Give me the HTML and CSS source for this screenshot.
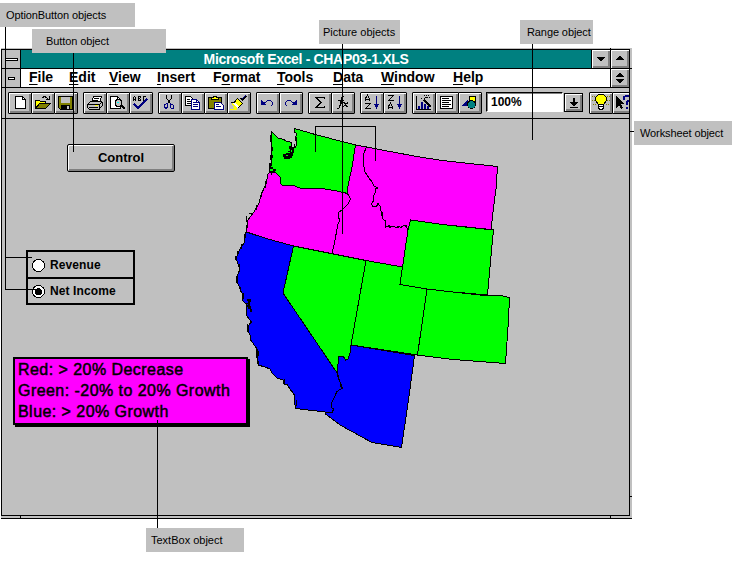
FILE: index.html
```
<!DOCTYPE html>
<html lang="en">
<head>
<meta charset="utf-8">
<title>Microsoft Excel - CHAP03-1.XLS</title>
<link rel="stylesheet" href="styles.css">
</head>
<body>
<main class="window">
  <header class="titlebar">
    <div class="sysbox"><i class="dash"></i></div>
    <h1><span>Microsoft Excel - CHAP03-1.XLS</span></h1>
    <div class="winbtn"><svg width="18" height="18"><path d="M5 7h8v1h-1v1h-1v1h-1v1H8v-1H7V9H6V8H5z"/></svg></div>
    <div class="winbtn"><svg width="18" height="18"><path d="M5 10h8V9h-1V8h-1V7h-1V6H8v1H7v1H6v1H5z"/></svg></div>
  </header>
  <nav class="menubar">
    <div class="sysbox"><i class="dash small"></i></div>
    <ul class="menus">
      <li class="w40"><u>F</u>ile</li><li class="w40"><u>E</u>dit</li><li class="w48"><u>V</u>iew</li><li class="w56"><u>I</u>nsert</li><li class="w64">F<u>o</u>rmat</li><li class="w56"><u>T</u>ools</li><li class="w48"><u>D</u>ata</li><li class="w72"><u>W</u>indow</li><li><u>H</u>elp</li>
    </ul>
    <div class="winbtn"><svg width="18" height="18"><path d="M5 8h8V7h-1V6h-1V5h-1V4H8v1H7v1H6v1H5zM5 10h8v1h-1v1h-1v1h-1v1H8v-1H7v-1H6v-1H5z"/></svg></div>
  </nav>
  <div class="toolbar">
    <div class="group">
      <button><svg viewBox="0 0 24 22"><path class="w k" d="M7.500 4.500H14.500L17.500 7.500V16.500H7.500Z"/><path class="k" d="M14.500 4.500V7.500H17.500"/></svg></button>
      <button><svg viewBox="0 0 24 22"><path class="y k" d="M4.500 16.500V8.500H8.500L9.500 9.500H14.500V11.500"/><path class="ol k" d="M4.500 16.500L8.500 11.500H19.500L14.500 16.500Z"/><path class="k" d="M11.500 5.500L13.500 4.500L15.500 5.500L17.500 7.500M18.500 4V7.500H15"/></svg></button>
      <button><svg viewBox="0 0 24 22"><path class="ol k" d="M4.500 4.500H18.500V17.500H6.500L4.500 15.500Z"/><path fill="#c0c0c0" d="M7 5h9v6H7z"/><path d="M7 13h9v4H7z"/><path fill="#c0c0c0" d="M13 14h2v3h-2z"/></svg></button>
    </div>
    <div class="group">
      <button><svg viewBox="0 0 24 22"><path class="w k" d="M8.500 10.500L10.500 4.500H18.500L16.500 10.500"/><path class="k" d="M11 6.500H16M10 8.500H15"/><path class="g k" d="M4.500 12.500L7.500 9.500H18.500L19.500 10.500V13.500L16.500 16.500V17.500H6.500L4.500 15.500Z"/><path class="k" d="M4 12.500H16.500L19 10M16.500 13V17M6 15.500H15"/><path fill="#ff0" d="M12 13h3v1h-3z"/></svg></button>
      <button><svg viewBox="0 0 24 22"><path class="w k" d="M4.500 4.500H11.500L14.500 7.500V16.500H4.500Z"/><path class="k" d="M11.500 4.500V7.500H14.500"/><circle class="lens" cx="12.500" cy="11" r="3.500"/><path d="M15 13L19 17" stroke="#000" stroke-width="2"/><path d="M11 10h2v1h-2z" fill="#0ff"/></svg></button>
      <button><svg viewBox="0 0 24 22"><path class="k" d="M4.500 9V6L5.500 4.500L6.500 6V9M4 7.500H7M9.500 8.500V4.500H11L11.500 5.500L10.500 6.500L11.500 7.500L11 8.500H9M16.500 5L15.500 4.500L14.500 5V8L15.500 8.500L16.500 8"/><path stroke="#000080" stroke-width="2" fill="none" d="M5 12L9 16L18 7"/></svg></button>
    </div>
    <div class="group">
      <button><svg viewBox="0 0 24 22"><path class="k" d="M8.500 3V6L12.500 12M13.500 3V6L9.500 12"/><path class="n" d="M9.500 11.500L6.500 12.500V15.500L8.500 16.500L9.500 14.500ZM12.500 11.500L15.500 13.500V16.500H13.500L12.500 15.500Z"/></svg></button>
      <button><svg viewBox="0 0 24 22"><path class="w k" d="M4.500 4.500H9.500L11.500 6.500V13.500H4.500Z"/><path class="k" d="M6 7.500H9M6 9.500H10M6 11.500H10"/><path class="w n" d="M10.500 7.500H15.500L18.500 10.500V17.500H10.500Z"/><path class="n" d="M12 10.500H15M12 12.500H17M12 14.500H17M15.500 8V10.500H18"/></svg></button>
      <button><svg viewBox="0 0 24 22"><path class="ol k" d="M4.500 5.500H17.500V16.500H4.500Z"/><path class="y k" d="M7.500 7.500V5.500H9.500V4.500H12.500V5.500H14.500V7.500Z"/><path class="w n" d="M10.500 10.500H16.500L19.500 13.500V17.500H10.500Z"/><path class="n" d="M12 12.500H15M12 14.500H17"/></svg></button>
      <button><svg viewBox="0 0 24 22"><path class="y" d="M10 7L15 12L9 17L4 16L7 15L4 12Z"/><path fill="#fff" d="M7 10L12 15L10 16L5 11Z"/><path class="k" d="M4 10.500H7L10.500 6.500L15.500 11.500L11 16"/><path d="M12 6L16 10L17 7L20 4L18 3L15 6Z"/><path class="n" d="M14.500 7.500L18.500 3.500"/><path stroke="#ff0" d="M3 17.500H10"/></svg></button>
    </div>
    <div class="group">
      <button><svg viewBox="0 0 24 22"><path fill="#000080" d="M5 8L11 13H5Z"/><path class="n" d="M8 11.500L11.500 8.500H14.500L16.500 10.500V12.500L15.500 14"/></svg></button>
      <button><svg viewBox="0 0 24 22"><path fill="#000080" d="M18 8L12 13H18Z"/><path class="n" d="M15 11.500L11.500 8.500H8.500L6.500 10.500V12.500L7.500 14"/></svg></button>
    </div>
    <div class="group">
      <button><svg viewBox="0 0 24 22"><path class="k" d="M16.500 7V5.500H7.500L12.500 10.500L7.500 15.500H16.500V14"/><path class="k" d="M8.500 5.500L13.500 10.500L8.500 15.500"/></svg></button>
      <button><svg viewBox="0 0 24 22"><path class="k" d="M13.500 5.500L12.500 4.500H11.500L10.500 6L8.500 15.500L7.500 16.500H5.500M7 8.500H13M11.500 5L9.500 14M12 10.500H13.500L15.500 14.500H17M17 10.500L12.500 14.500M13.500 10.500L16 14.500"/></svg></button>
    </div>
    <div class="group">
      <button><svg viewBox="0 0 24 22"><path class="k" d="M5.500 9V6.500L7.500 3L9.500 6.500V9M6 7.500H9M5 11.500H10.500L5.500 16.500H11"/><path class="n" d="M16.500 4V16"/><path fill="#000080" d="M14 12h5v1h-1v2h-1v2h-1v-2h-1v-2h-1z"/></svg></button>
      <button><svg viewBox="0 0 24 22"><path class="k" d="M5 3.500H10.500L5.500 8.500H11M5.500 17V14.500L7.500 11L9.500 14.500V17M6 15.500H9"/><path class="n" d="M16.500 4V16"/><path fill="#000080" d="M14 12h5v1h-1v2h-1v2h-1v-2h-1v-2h-1z"/></svg></button>
    </div>
    <div class="group">
      <button><svg viewBox="0 0 24 22"><path class="k" d="M4.500 4V17.500H19"/><path fill="#000080" d="M6 14h2v3H6zM9 10h2v7H9zM12 12h2v5h-2zM15 14h2v3h-2z"/><path stroke="#000" stroke-width="2" d="M12 8L19 15"/><path class="k" stroke-dasharray="1 1" d="M9 6.500L12 4L18 3M12 7L15 5H19"/></svg></button>
      <button><svg viewBox="0 0 24 22"><path class="w k" d="M5.500 4.500H17.500V16.500H5.500Z"/><path class="k" d="M7 6.500H14M7 8.500H16M7 10.500H14M7 12.500H16M7 14.500H14"/></svg></button>
      <button><svg viewBox="0 0 24 22"><path class="y k" d="M11.500 4.500H17.500V11.500H11.500Z"/><path fill="#000080" d="M3 14L10 7V14Z"/><circle class="disc" cx="13.500" cy="12.500" r="4"/></svg></button>
    </div>
    <div class="zoom">100%</div>
    <div class="drop"><svg width="17" height="17"><path d="M8 4h2v4h3v1h-1v1h-1v1h-1v1H8v-1H7v-1H6V9H5V8h3zM5 13h8v1H5z"/></svg></div>
    <div class="group last">
      <button><svg viewBox="0 0 24 22"><path class="y k" d="M9.500 2.500H14.500L17.500 5.500V8.500L14.500 12.500H9.500L6.500 8.500V5.500Z"/><path class="w k" d="M9.500 12.500H14.500V15.500L13.500 17.500H10.500L9.500 15.500Z"/><path class="k" d="M10 14.500H14"/><path stroke="#808000" stroke-dasharray="1 1" d="M3 4.500H6M3 8.500H6M18 4.500H21M18 8.500H21M4 12.500H7M17 12.500H20"/></svg></button>
      <button><svg viewBox="0 0 24 22"><path d="M4 4L12 12H9L11 16L9 17L7 13L4 16Z"/><path stroke="#000080" stroke-width="2" fill="none" d="M12 8V5L14 4H17L18 6V8L15 10V13M15 14.500V16.500"/></svg></button>
    </div>
  </div>
  <section class="sheet">
    <button class="control">Control</button>
    <div class="options">
      <label><svg width="13" height="13"><circle cx="6.500" cy="6.500" r="6" fill="#fff" stroke="#000"/></svg>Revenue</label>
      <label><svg width="13" height="13"><circle cx="6.500" cy="6.500" r="6" fill="#fff" stroke="#000"/><circle cx="6.500" cy="6.500" r="3.500"/></svg>Net Income</label>
    </div>
    <div class="legend"><p class="l1">Red: &gt; 20% Decrease</p><p class="l2">Green: -20% to 20% Growth</p><p class="l3">Blue: &gt; 20% Growth</p></div>
    <svg class="map" viewBox="230 120 290 335" width="290" height="335">
      <path class="up" d="M246 232L268 239L293.500 246L283 293L337.500 373.500L338 377L340 382L340 386L342.500 388L341 390L337 391.500L334 398L332 402L331 407L333.500 409L332.500 412L325 412L295.500 408.500L294.500 402V395L290 389L287 384.500L284 384L283 380L277 378L272 373L270 369L265 367L258 365V361L257 357L258 350L254 345L251 340L250 335L248 331V326L251.500 322L250 320L246 315L246 304L243 301L242 298L243 295L240 289L237 281L238 274L240 269L238 264L236 258L240 249L244 243L245 238L245 233Z"/>
      <path class="down" d="M269 173L275 172L280 177V183L282 185L292 185L300 188L317 188L325 189L337 191L347.500 193.500L350.500 199L348 204L343 209L338 213V217L340 220L338 224L335 240L332 254L293.500 246L268 239L246.500 232L247 228L248 220L250 217L254 212L257 207L259 203L261 195L266 184L268 174Z"/>
      <path class="mid" d="M271.500 131.500L275 135L278 138L284 139.500L286 141L291.500 142.500L292 147H295.500L297 144L295 138L297 134L294.500 132V128.500L317 135L355.500 145L352 167L347.500 188V193.500L337 191L325 189L317 188L300 188L292 185L282 185L280 183V177L275 172L269.500 171L269 167L272 165L271 160L272 151L271 139Z"/>
      <path d="M289 146h3v2h2v5h-1v3h-1v2h-2v1h-6v-2h-1v-3h3v-1h2v-2h2v-2h-1zM270 155h3v3h-2v2h-1zM269 163h2v4h2v2h-3zM273 169h3v2h-3z"/>
      <path fill="#0f0" d="M288 152h2v1h-2zM291 150h1v2h-1zM286 155h2v1h-2z"/>
      <path class="down" d="M355.500 145L366.500 147L363.500 154L363 162L365 172L369 178L372 182L377.500 188L375 193L374 200L371.500 204L373 207L376 205L378 203L380 206L382.500 218L385.500 221V227L389 226L396 226L397 228L401 226L405 225L408 230L402.500 267L366 260.500L332 254L335 240L338 224L340 220L338 217V213L343 209L348 204L350.500 199L347.500 193.500V188L352 167Z"/>
      <path class="down" d="M366.500 147L390 151.500L417 156.500L442 160.500L465 163L497.500 166.500L496 189L494 204L491 229.500L442 224.500L410.500 220L408 230L406 225.500H403.500L401 227.500L399 226L396 227.500L392 226L389 228V225.500L385.500 227V221L382.500 218.500L382 212L380 210V206L378 203.500L376.500 206.500L373 207L371.500 204L374 200L373.500 196L375 193V189L377.500 188L374 186L372 182L365 172L363 162L363.500 154Z"/>
      <path class="mid" d="M410.500 220L442 224.500L493.500 230L491.500 250L487.500 295L453 292L427 289L400 284.500L402.500 267L408 230Z"/>
      <path class="mid" d="M427 289L453 292L480 295H498L509.500 297.500L508.500 320L505.500 363.500L453 359.500L417.500 355Z"/>
      <path class="mid" d="M366 260.500L402.500 267L400 284.500L427 289L417.500 355L351 345Z"/>
      <path class="mid" d="M293.500 246L366 260.500L351 345L350 353L348 359L345.500 360L343 356H338.500L337.500 373.500L283 293Z"/>
      <path class="up" d="M351 345L414.500 355.500L408.500 400L401.500 447.500L372 442.500L340 425L325.500 414V412H332.500L333.500 409L331 407L332 402L334 398L337 391.500L342.500 388L340 382L337.500 373.500L338.500 356H343L345.500 360L348 359L350 353Z"/>
      <path d="M247 299h4v3h-1v4h1v3h1v3h-2v-3h-2v-2h-1v-2h1v-4h-1z"/>
      <path class="shore" d="M270.500 135V142M272.500 147V151M271.500 172V175M265.500 181V188M261.500 192V197M256.500 205V210M252.500 213H249M246.500 216V222M246.500 225V230M244.500 234V240M241.500 244V249M237.500 251V255M235.500 256V260M239.500 264V270M236.500 276V283M240.500 287V292M243.500 293V299M245.500 303H248M246.500 306V315M250.500 320V323M247.500 324V332M250.500 337V341M256.500 349V358M258.500 351V356M257.500 358V364M284.500 379V385M294.500 394V400M296.500 400V406M296.500 137V143M294.500 144V147"/>
    </svg>
  </section>
  <footer class="edge"></footer>
</main>
<svg class="leaders" width="744" height="576"><path d="M5.500 27V289.500H39M5.500 257.500H32M73.500 53V152M342.500 44V234M315.500 152V126.500H375.500V161M532.500 43V140M630 131.500H634M157.500 420V528M20.500 516V518M610.500 516V518M630 496.500H632M630 68.500H632M610.500 48V50"/></svg>
<div class="callout c1"><span>OptionButton objects</span></div>
<div class="callout c2"><span>Button object</span></div>
<div class="callout c3"><span>Picture objects</span></div>
<div class="callout c4"><span>Range object</span></div>
<div class="callout c5"><span>Worksheet object</span></div>
<div class="callout c6"><span>TextBox object</span></div>
</body>
</html>
```
FILE: styles.css
```
* { box-sizing: border-box; }
body { margin: 0; width: 744px; height: 576px; overflow: hidden; background: #fff; position: relative; font-family: "Liberation Sans", Arial, sans-serif; color: #000; }
h1, p, ul { margin: 0; padding: 0; }
svg { display: block; shape-rendering: crispEdges; }
.window { margin-left: 1px; padding-top: 48px; width: 631px; height: 519px; display: flex; flex-direction: column; background: linear-gradient(#fff 48px, #c0c0c0 48px); }
.titlebar, .menubar, .toolbar, .sheet { width: 629px; border-left: 1px solid #000; border-right: 1px solid #000; }
.titlebar { height: 20px; margin-top: 1px; border-top: 1px solid #000; border-bottom: 1px solid #000; display: flex; background: #008080; }
.menubar { height: 19px; border-bottom: 1px solid #000; display: flex; background: #fff; }
.sysbox { width: 19px; border-right: 1px solid #000; background: #c0c0c0; display: flex; align-items: center; justify-content: center; }
.dash { width: 13px; height: 3px; border: 1px solid #000; background: #fff; }
.dash.small { width: 7px; }
h1 { flex: 1; text-align: center; color: #fff; font-size: 14px; line-height: 18px; letter-spacing: -.33px; }
.winbtn { width: 19px; height: 18px; border-left: 1px solid #000; background: #c0c0c0; box-shadow: inset 1px 1px #fff, inset -2px -2px #808080; }
.menus { flex: 1; display: flex; list-style: none; padding-left: 8px; font: bold 14px/17px "Liberation Sans", sans-serif; }
.menus u { text-decoration: underline; text-underline-offset: 2px; text-decoration-thickness: 1px; }
.w40 { width: 40px; } .w48 { width: 48px; } .w56 { width: 56px; } .w64 { width: 64px; } .w72 { width: 72px; }
.toolbar { height: 31px; border-bottom: 1px solid #000; padding: 4px 0 0 6px; display: flex; overflow: hidden; }
.group { display: flex; margin-right: 5px; flex: none; height: 22px; }
.group button { width: 24px; height: 22px; margin: 0 -1px 0 0; padding: 0; border: 1px solid #000; border-radius: 1px; background: #c0c0c0; box-shadow: inset 1px 1px #fff, inset -2px -2px #808080; }
.group button:last-child { margin-right: 0; }
.group svg { width: 24px; height: 22px; margin: -1px; }
.k { stroke: #000; fill: none; } .n { stroke: #000080; fill: none; }
.w { fill: #fff; } .y { fill: #ff0; } .ol { fill: #808000; } .g { fill: #c0c0c0; }
.lens { fill: #c0c0c0; stroke: #000; } .disc { fill: #008080; stroke: #000; }
.zoom { flex: none; width: 77px; height: 20px; margin: 0 1px 0 -1px; border: 1px solid #000; border-color: #000 #fff #fff #000; box-shadow: inset 1px 1px #808080; background: #fff; font: bold 12px/19px "Liberation Sans", sans-serif; padding-left: 4px; }
.drop { flex: none; width: 19px; height: 19px; border: 1px solid #000; margin: 1px 6px 0 0; background: #c0c0c0; box-shadow: inset 1px 1px #fff, inset -2px -2px #808080; }
.sheet { height: 397px; border-bottom: 1px solid #000; position: relative; padding: 25px 0 0 11px; }
.control { display: block; width: 108px; height: 28px; margin-left: 54px; padding: 0 0 2px; border: 1px solid #000; border-radius: 2px; background: #c0c0c0; box-shadow: inset 1px 1px #fff, inset -2px -2px #808080; font: bold 13px "Liberation Sans", sans-serif; }
.options { width: 109px; height: 55px; margin: 78px 0 0 13px; border: 2px solid #000; }
.options label { display: flex; align-items: center; height: 25px; padding: 1px 0 0 4px; gap: 5px; font-weight: bold; font-size: 12px; letter-spacing: .1px; }
.options label + label { border-top: 2px solid #000; height: 26px; padding-top: 0; }
.legend { width: 235px; height: 68px; margin-top: 52px; border: 2px solid #000; background: #f0f; box-shadow: 2px 2px #000; padding: 0 3px; font-size: 16px; line-height: 21px; letter-spacing: .45px; white-space: nowrap; -webkit-text-stroke: .5px #000; }
.map { position: absolute; left: 228px; top: 1px; }
.map .up { fill: #00f; stroke: #000; } .map .mid { fill: #0f0; stroke: #000; } .map .down { fill: #f0f; stroke: #000; }
.map .shore { fill: none; stroke: #000; }
.edge { width: 631px; height: 3px; border-bottom: 1px solid #000; }
.leaders { position: absolute; left: 0; top: 0; fill: none; stroke: #000; }
.callout { position: absolute; height: 24px; background: #c0c0c0; font-size: 11px; line-height: 24px; white-space: nowrap; letter-spacing: -.1px; }
.c1 { left: 0; top: 3px; width: 135px; padding-left: 6px; }
.c2 { left: 32px; top: 29px; width: 134px; padding-left: 14px; }
.c3 { left: 319px; top: 20px; width: 81px; padding-left: 4px; letter-spacing: 0; }
.c4 { left: 520px; top: 20px; width: 73px; padding-left: 7px; }
.c5 { left: 634px; top: 121px; width: 98px; padding-left: 6px; }
.c6 { left: 146px; top: 528px; width: 98px; padding-left: 5px; letter-spacing: 0; }
```
